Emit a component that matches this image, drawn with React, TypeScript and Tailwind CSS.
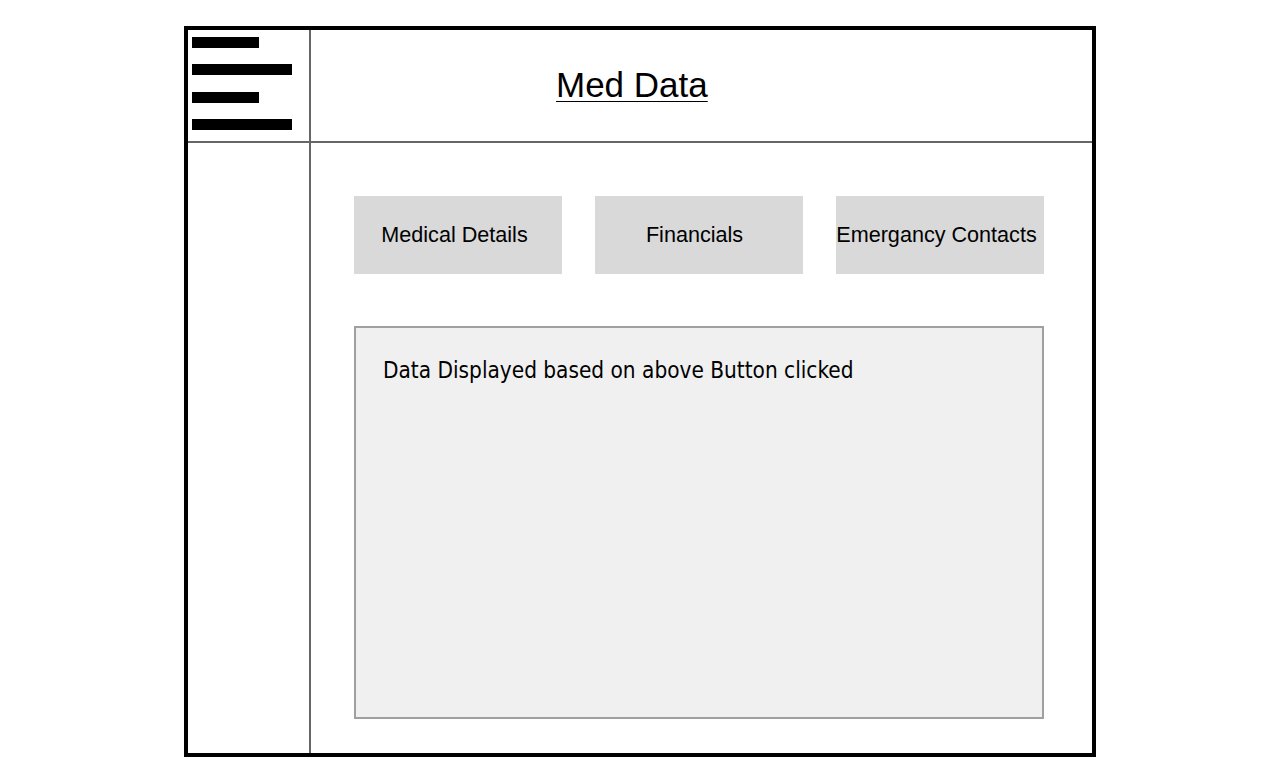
export default function App() {
  const bar = "bg-black h-[11px]";
  return (
    <div className="w-[1280px] h-[768px] bg-white pt-[26px]">
      <div className="mx-auto w-[912px] h-[731px] border-[4px] border-black flex flex-col">
        <div className="flex h-[113px] border-b-2 border-[#666666]">
          <div className="w-[123px] border-r-2 border-[#666666] pl-[4px] pt-[7px] flex flex-col">
            <div className={`${bar} w-[67px]`} />
            <div className={`${bar} w-[100px] mt-[16px]`} />
            <div className={`${bar} w-[67px] mt-[17px]`} />
            <div className={`${bar} w-[100px] mt-[16px]`} />
          </div>
          <div className="flex-1 flex items-center pl-[245px]">
            <span
              className="text-[35px] text-black underline underline-offset-[4px] decoration-[1px]"
              style={{ fontFamily: '"Liberation Sans", Arial, sans-serif' }}
            >
              Med Data
            </span>
          </div>
        </div>
        <div className="flex flex-1">
          <div className="w-[123px] border-r-2 border-[#666666]" />
          <div className="flex-1 pl-[43px] pr-[48px] pt-[53px]">
            <div
              className="flex gap-[33px] text-[21.6px] text-black"
              style={{ fontFamily: '"Liberation Sans", Arial, sans-serif' }}
            >
              <div className="w-[208px] h-[78px] bg-[#d9d9d9] flex items-center justify-center pr-[7px] whitespace-nowrap">
                Medical Details
              </div>
              <div className="w-[208px] h-[78px] bg-[#d9d9d9] flex items-center justify-center pr-[9px] whitespace-nowrap">
                Financials
              </div>
              <div className="w-[208px] h-[78px] bg-[#d9d9d9] flex items-center justify-center pr-[7px] whitespace-nowrap">
                Emergancy Contacts
              </div>
            </div>
            <div className="mt-[52px] w-[690px] h-[393px] border-2 border-[#a0a0a0] bg-[#f0f0f0] pl-[27px] pt-[26px]">
              <span
                className="text-[22.4px] text-black"
                style={{ fontFamily: '"DejaVu Sans Condensed", "DejaVu Sans", sans-serif' }}
              >
                Data Displayed based on above Button clicked
              </span>
            </div>
          </div>
        </div>
      </div>
    </div>
  );
}
